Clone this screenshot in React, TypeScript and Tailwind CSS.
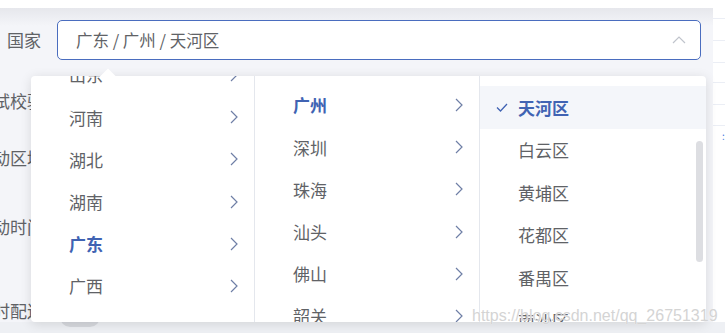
import React from 'react';

const provinces = ['山东', '河南', '湖北', '湖南', '广东', '广西'];
const cities = ['广州', '深圳', '珠海', '汕头', '佛山', '韶关'];
const districts = ['天河区', '白云区', '黄埔区', '花都区', '番禺区', '南沙区'];

const Chevron = () => (
  <svg width="8" height="14" viewBox="0 0 8 14" fill="none" className="shrink-0">
    <path d="M1 1l6 6-6 6" stroke="#6f7fa6" strokeWidth="1.2" />
  </svg>
);

const FormLabel = ({ text, pad = 0 }: { text: string; pad?: number }) => (
  <div className="w-[44px] flex justify-end shrink-0 whitespace-nowrap text-[17px] leading-[24px] text-[#606266]">
    <span className={pad ? 'pr-[3px]' : ''}>{text}</span>
  </div>
);

export default function App() {
  return (
    <div className="relative w-[725px] h-[333px] overflow-hidden bg-[#eef0f4] font-['Noto_Sans_CJK_SC','Noto_Sans',sans-serif]">
      <div className="flex h-[322px]">
        {/* form panel */}
        <div className="w-[713px] flex flex-col bg-white">
          <div className="h-[8px] shrink-0 bg-white" />
          <div className="flex-1 min-h-0 flex flex-col bg-[linear-gradient(#e6e7ec,#f4f5f9_18px)] pt-[12px]">
            <div className="flex items-center h-[40px] shrink-0">
              <FormLabel text="国家" pad={1} />
              <div className="ml-[13px] w-[644px] h-[40px] flex items-center justify-between rounded-[5px] border border-[#4a6dbf] bg-white pl-[18px] pr-[14px]">
                <span className="text-[16.5px] text-[#606266]">广东 / 广州 / 天河区</span>
                <svg width="14" height="8" viewBox="0 0 14 8" fill="none">
                  <path d="M1 7l6-6 6 6" stroke="#c0c4cc" strokeWidth="1.2" />
                </svg>
              </div>
            </div>
            <div className="mt-[29px] shrink-0"><FormLabel text="测试校验" /></div>
            <div className="mt-[33px] shrink-0"><FormLabel text="活动区域" /></div>
            <div className="mt-[45px] shrink-0"><FormLabel text="活动时间" /></div>
            <div className="mt-[60px] shrink-0 flex items-start">
              <FormLabel text="即时配送" />
              <div className="ml-[16px] mt-[8px] w-[40px] h-[20px] rounded-full bg-[#d7d9de]" />
            </div>
          </div>
        </div>
        {/* table edge on the right */}
        <div className="flex-1 bg-white flex flex-col">
          <div className="h-[19px] border-b border-[#ebeef5]" />
          <div className="h-[22px] border-b border-[#ebeef5]" />
          <div className="h-[22px] border-b border-[#ebeef5]" />
          <div className="h-[20px] border-b border-[#ebeef5]" />
          <div className="h-[22px] border-b border-[#ebeef5]" />
          <div className="h-[21px] border-b border-[#ebeef5]" />
          <div className="pl-[9px] pt-[5px] text-[10px] leading-none text-[#4a7be0]">:</div>
        </div>
      </div>

      {/* cascader dropdown */}
      <div className="absolute left-[31px] top-[76px] w-[675px] h-[246px] bg-white rounded-[4px] shadow-[0_2px_12px_rgba(0,0,0,0.12)] flex overflow-hidden">
        <div className="w-[224px] border-r border-[#e4e7ed] overflow-hidden">
          <ul className="-mt-[22px]">
            {provinces.map((p) => (
              <li key={p} className="h-[42.2px] flex items-center justify-between pl-[38px] pr-[16px]">
                <span className={p === '广东' ? 'text-[17px] font-bold text-[#4063b3]' : 'text-[17px] text-[#606266]'}>{p}</span>
                <Chevron />
              </li>
            ))}
          </ul>
        </div>
        <div className="w-[225px] border-r border-[#e4e7ed] overflow-hidden">
          <ul className="pt-[8px]">
            {cities.map((c) => (
              <li key={c} className="h-[42.2px] flex items-center justify-between pl-[38px] pr-[16px]">
                <span className={c === '广州' ? 'text-[17px] font-bold text-[#4063b3]' : 'text-[17px] text-[#606266]'}>{c}</span>
                <Chevron />
              </li>
            ))}
          </ul>
        </div>
        <div className="relative flex-1 overflow-hidden">
          <ul className="pt-[10px]">
            {districts.map((d) => (
              <li key={d} className={`h-[42.6px] flex items-center pl-[16px] ${d === '天河区' ? 'bg-[#f4f6fa]' : ''}`}>
                <span className="w-[22px] shrink-0">
                  {d === '天河区' && (
                    <svg width="12" height="9" viewBox="0 0 12 9" fill="none">
                      <path d="M1 4.5l3.5 3.5L11 1" stroke="#4063b3" strokeWidth="1.3" />
                    </svg>
                  )}
                </span>
                <span className={d === '天河区' ? 'text-[17px] font-bold text-[#4063b3]' : 'text-[17px] text-[#606266]'}>{d}</span>
              </li>
            ))}
          </ul>
          <div className="absolute right-[3px] top-[65px] w-[7px] h-[121px] rounded-full bg-[#dddee2]" />
        </div>
      </div>
      {/* popper arrow */}
      <div className="absolute left-[102px] top-[71px] w-[12px] h-[12px] rotate-45 bg-white" />

      {/* watermark */}
      <div className="absolute left-[472px] top-[305px] text-[16px] leading-[22px] text-[#d4d4d4] font-['Liberation_Sans',sans-serif] [text-shadow:0_0_1px_#fff]">
        https://blog.csdn.net/qq_26751319
      </div>
    </div>
  );
}
